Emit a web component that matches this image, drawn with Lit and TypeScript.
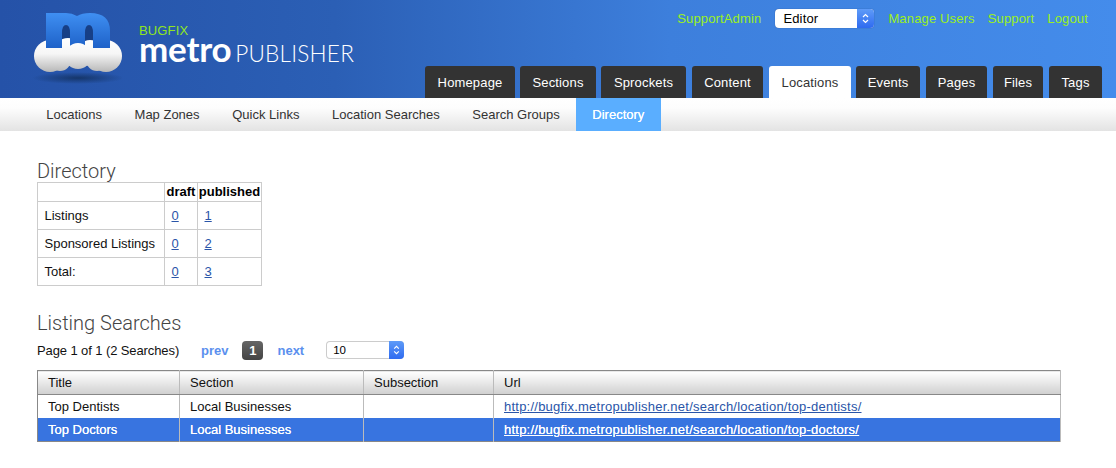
import { LitElement, html, css, svg } from "lit";
import { customElement } from "lit/decorators.js";

const TABS = [
  { label: "Homepage", width: 90, gap: 0 },
  { label: "Sections", width: 76, gap: 5 },
  { label: "Sprockets", width: 85, gap: 5 },
  { label: "Content", width: 71, gap: 6 },
  { label: "Locations", width: 82, gap: 6 },
  { label: "Events", width: 64, gap: 5 },
  { label: "Pages", width: 61, gap: 6 },
  { label: "Files", width: 50, gap: 6 },
  { label: "Tags", width: 53, gap: 6 },
];
const SUB = ["Locations", "Map Zones", "Quick Links", "Location Searches", "Search Groups", "Directory"];
const DIR = [["Listings", "0", "1"], ["Sponsored Listings", "0", "2"], ["Total:", "0", "3"]];
const ROWS = [
  ["Top Dentists", "Local Businesses", "", "http://bugfix.metropublisher.net/search/location/top-dentists/"],
  ["Top Doctors", "Local Businesses", "", "http://bugfix.metropublisher.net/search/location/top-doctors/"],
];

const logo = svg`
  <defs>
    <linearGradient id="mg" x1="0" y1="13" x2="0" y2="50" gradientUnits="userSpaceOnUse">
      <stop offset="0" stop-color="#3f8ff2"/><stop offset="1" stop-color="#1c5fc6"/>
    </linearGradient>
    <linearGradient id="cg" x1="0" y1="38" x2="0" y2="73" gradientUnits="userSpaceOnUse">
      <stop offset="0" stop-color="#ffffff"/><stop offset=".45" stop-color="#f6f6f6"/><stop offset="1" stop-color="#b4b4b4"/>
    </linearGradient>
    <radialGradient id="sg"><stop offset="0" stop-color="#12305f" stop-opacity=".85"/><stop offset="1" stop-color="#12305f" stop-opacity="0"/></radialGradient>
  </defs>
  <ellipse cx="78" cy="78" rx="46" ry="6" fill="url(#sg)"/>
  <rect x="60" y="24" width="12" height="24" fill="#173f86"/>
  <rect x="83" y="24" width="12" height="24" fill="#173f86"/>
  <g fill="url(#cg)">
    <circle cx="50" cy="56" r="16"/><circle cx="106" cy="56" r="16"/>
    <circle cx="68" cy="52" r="14"/><circle cx="90" cy="53" r="13"/>
  </g>
  <path fill="url(#mg)" fill-rule="evenodd" d="M46 13H66Q72 13 77 16Q82 13 90 13Q110 13 110 31V48H46ZM62 48V33Q62 25 66 25Q70 25 70 33V48ZM85 48V33Q85 25 89 25Q93 25 93 33V48Z"/>
  <g fill="url(#cg)">
    <circle cx="78" cy="56" r="13"/><circle cx="60" cy="60" r="11"/><circle cx="97" cy="60" r="11"/>
  </g>`;

@customElement("app-root")
export class AppRoot extends LitElement {
  static styles = css`
    :host { display: block; font-family: "Liberation Sans", Arial, sans-serif; font-size: 13px; color: #111; background: #fff; height: 468px; overflow: hidden; }
    .header { height: 98px; box-sizing: border-box; display: flex; justify-content: space-between; background: linear-gradient(90deg, #2552a8 0%, #2b5fb5 30%, #3d7fdc 60%, #448ceb 100%); }
    .logo-svg { width: 122px; height: 98px; flex: none; display: block; }
    .brand { display: flex; align-items: flex-start; }
    .wordmark { margin-left: 17px; padding-top: 23px; display: flex; flex-direction: column; }
    .env { color: #8fe61e; font-size: 13px; line-height: 15px; letter-spacing: .15px; }
    .name { display: flex; align-items: baseline; color: #fff; font-family: Lato, sans-serif; line-height: 26px; margin-top: -3px; }
    .metro { font-size: 35px; font-weight: 700; letter-spacing: -.2px; }
    .pub { font-size: 22.6px; font-weight: 300; margin-left: 3.7px; letter-spacing: .2px; }
    .right { display: flex; flex-direction: column; justify-content: space-between; align-items: flex-end; padding-right: 14px; }
    .util { display: flex; align-items: center; padding: 9px 14px 0 0; color: #9bf01c; font-size: 13px; letter-spacing: .15px; }
    .util span { margin-left: 13px; }
    .util span:first-child { margin-left: 0; }
    .select { display: flex; width: 99px; height: 19px; margin-left: 14px; border-radius: 4px; overflow: hidden; background: #fff; color: #000; align-items: stretch; box-shadow: 0 0 1px rgba(0,0,40,.5); }
    .select + span { margin-left: 14px; }
    .select .val { flex: 1; padding-left: 8px; line-height: 19px; }
    .arrows { flex: none; display: block; }
    .stepper { width: 17px; background: linear-gradient(#5e9bf8, #2f6bf0); display: flex; align-items: center; justify-content: center; }
    .tabs { display: flex; }
    .tab { height: 32px; box-sizing: border-box; text-align: center; line-height: 33px; background: #333; color: #fff; border-radius: 3px 3px 0 0; letter-spacing: .15px; }
    .tab.on { background: #fff; color: #333; }
    .subnav { height: 33px; display: flex; padding-left: 30px; background: linear-gradient(#fff 0%, #fdfdfd 30%, #e3e3e3 100%); color: #333; }
    .subitem { padding: 0 16.3px; line-height: 33px; }
    .subitem.on { background: #5aaeff; color: #fff; text-shadow: 0 0 .6px #fff; }
    .content { padding: 30px 55px 0 37px; }
    h2 { margin: 0; font-family: Roboto, sans-serif; font-weight: 300; font-size: 20px; line-height: 21px; color: #444; }
    .dir { border-collapse: collapse; width: 225px; table-layout: fixed; }
    .dir td, .dir th { border: 1px solid #ccc; padding: 0; height: 27px; text-align: left; }
    .dir th { height: 18px; font-size: 13px; color: #000; text-align: center; line-height: 18px; }
    .dir .d1 { width: 126px; } .dir .d2 { width: 32px; }
    .dir td { padding-left: 6.5px; }
    a { color: #2a55a8; text-decoration: underline; }
    .listing { margin-top: 27px; }
    .pager { display: flex; align-items: center; height: 20px; margin-top: 6px; }
    .pager .count { width: 164px; letter-spacing: -.1px; }
    .pager b { color: #5b90ee; font-weight: bold; }
    .pager .cur { width: 21px; height: 19px; margin: 0 14px; border-radius: 4px; background: linear-gradient(#666, #444); color: #fff; font-weight: bold; text-align: center; line-height: 19px; }
    .pager .select { width: 78px; height: 18px; margin-left: 22px; font-size: 11.5px; box-shadow: inset 0 0 0 1px #ccc; }
    .pager .select .val { line-height: 18px; padding-left: 7px; }
    .pager .stepper { width: 15px; }
    .grid { width: 1024px; margin-top: 10px; border-collapse: collapse; table-layout: fixed; border: 1px solid #888; }
    .grid th { height: 23px; padding: 0 0 0 10px; text-align: left; font-weight: normal; background: linear-gradient(#fff, #d0d0d0); border-bottom: 1px solid #888; border-right: 1px solid #bbb; }
    .grid td { height: 23px; padding: 0 0 0 10px; border-right: 1px solid #bbb; }
    .grid td a { letter-spacing: .23px; }
    .grid tr.sel td { background: #3874e0; color: #fff; text-shadow: 0 0 .6px #fff; }
    .grid tr.sel a { color: #fff; }
    .grid .c1 { width: 131px; } .grid .c2 { width: 173px; } .grid .c3 { width: 119px; }
  `;

  private stepper(size: number) {
    return html`<div class="stepper"><svg class="arrows" width="9" height=${size} viewBox="0 0 9 13"><path d="M2 5L4.5 2.5L7 5M2 8L4.5 10.5L7 8" fill="none" stroke="#fff" stroke-width="1.2"/></svg></div>`;
  }

  render() {
    return html`
      <div class="header">
        <div class="brand">
          <svg class="logo-svg" viewBox="0 0 122 98">${logo}</svg>
          <div class="wordmark">
            <div class="env">BUGFIX</div>
            <div class="name"><span class="metro">metro</span><span class="pub">PUBLISHER</span></div>
          </div>
        </div>
        <div class="right">
          <div class="util">
            <span>SupportAdmin</span>
            <div class="select"><div class="val">Editor</div>${this.stepper(13)}</div>
            <span>Manage Users</span><span>Support</span><span>Logout</span>
          </div>
          <div class="tabs">
            ${TABS.map((t) => html`<div class="tab ${t.label === "Locations" ? "on" : ""}" style="width:${t.width}px;margin-left:${t.gap}px">${t.label}</div>`)}
          </div>
        </div>
      </div>
      <div class="subnav">
        ${SUB.map((t) => html`<div class="subitem ${t === "Directory" ? "on" : ""}">${t}</div>`)}
      </div>
      <div class="content">
        <h2>Directory</h2>
        <table class="dir">
          <tr><th class="d1"></th><th class="d2">draft</th><th>published</th></tr>
          ${DIR.map((r) => html`<tr><td>${r[0]}</td><td><a href="#">${r[1]}</a></td><td><a href="#">${r[2]}</a></td></tr>`)}
        </table>
        <div class="listing">
          <h2>Listing Searches</h2>
          <div class="pager">
            <div class="count">Page 1 of 1 (2 Searches)</div>
            <b>prev</b><div class="cur">1</div><b>next</b>
            <div class="select"><div class="val">10</div>${this.stepper(12)}</div>
          </div>
          <table class="grid">
            <tr><th class="c1">Title</th><th class="c2">Section</th><th class="c3">Subsection</th><th>Url</th></tr>
            ${ROWS.map((r, i) => html`<tr class=${i === 1 ? "sel" : ""}><td>${r[0]}</td><td>${r[1]}</td><td>${r[2]}</td><td><a href="#">${r[3]}</a></td></tr>`)}
          </table>
        </div>
      </div>
    `;
  }
}
